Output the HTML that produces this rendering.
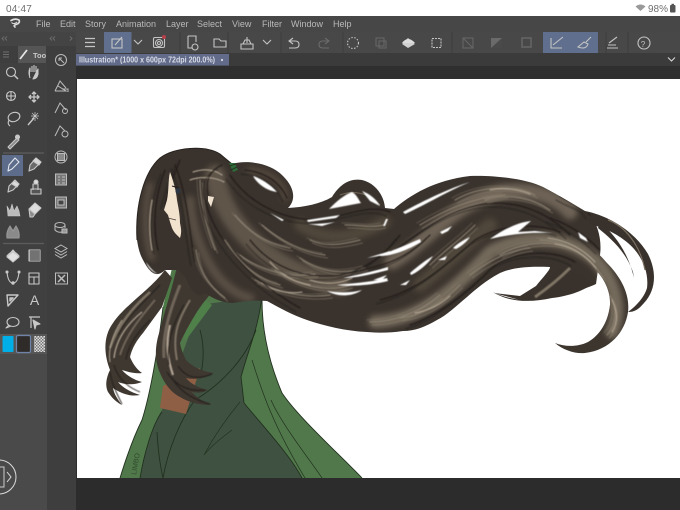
<!DOCTYPE html>
<html>
<head>
<meta charset="utf-8">
<style>
html,body{margin:0;padding:0;width:680px;height:510px;overflow:hidden;background:#2c2c2c}
svg{display:block;font-family:"Liberation Sans",sans-serif}
</style>
</head>
<body>
<svg width="680" height="510" viewBox="0 0 680 510" xmlns="http://www.w3.org/2000/svg">
<defs>
<filter id="b1" x="-10%" y="-10%" width="120%" height="120%"><feGaussianBlur stdDeviation="1.2"/></filter>
<filter id="b2" x="-10%" y="-10%" width="120%" height="120%"><feGaussianBlur stdDeviation="0.45"/></filter>
<filter id="b3" x="-20%" y="-20%" width="140%" height="140%"><feGaussianBlur stdDeviation="3"/></filter>
<pattern id="chk" width="3" height="3" patternUnits="userSpaceOnUse"><rect width="3" height="3" fill="#ddd"/><rect width="1.5" height="1.5" fill="#777"/><rect x="1.5" y="1.5" width="1.5" height="1.5" fill="#777"/></pattern>
<clipPath id="hairclip">
<path d="M137 240C135 205 144 172 160 158C175 147 205 145 220 154L232 164C245 160 270 162 283 176C295 188 296 200 288 208C305 207 320 204 332 197C340 184 350 178 362 180C375 183 384 195 385 208L394 209C410 195 435 180 470 176C490 175 525 178 543 187C560 196 575 205 590 214C598 225 602 240 600 255L596 284C590 287 580 290 570 292C555 300 530 300 520 300L494 293L520 296L536 286C545 275 550 270 550 267C525 266 512 268 500 273C485 281 475 290 467 297C455 307 447 315 437 320C425 327 415 331 403 331C390 333 380 333 367 332C345 331 325 326 307 320C292 315 280 308 267 301C255 300 245 301 233 303C222 303 212 298 205 293L178 270L165 270L142 258Z"/>
<path d="M540 228C565 228 590 243 606 262C622 278 630 295 628 312C625 332 610 350 585 353C575 354 563 350 555 343C565 347 578 347 588 342C600 335 608 322 610 305C611 288 600 270 585 262C570 255 550 250 530 250Z"/>
</clipPath>
</defs>

<!-- base UI -->
<rect width="680" height="510" fill="#2c2c2c"/>
<rect width="680" height="16" fill="#fff"/>
<rect y="16" width="680" height="16" fill="#474747"/>
<rect y="32" width="680" height="21" fill="#484848"/>
<rect x="76" y="53" width="604" height="13" fill="#3b3b3b"/>
<rect x="76" y="66" width="604" height="13" fill="#2f2f2f"/>
<rect x="0" y="32" width="47" height="478" fill="#4a4a4a"/>
<rect x="47" y="32" width="29" height="478" fill="#3e3e3e"/>
<rect x="0" y="32" width="76" height="14" fill="#444"/>
<rect x="0" y="46" width="47" height="17" fill="#3e3e3e"/>
<rect x="0" y="63" width="47" height="290" fill="#404040"/>
<rect x="18" y="46" width="28" height="17" fill="#555"/>
<rect x="0" y="334" width="47" height="20" fill="#565656"/>
<rect x="77" y="79" width="603" height="399" fill="#fff"/>

<!-- status -->
<text x="6" y="12" font-size="10" fill="#6f6f6f" letter-spacing=".2">04:47</text>
<text x="648" y="12" font-size="10" fill="#6f6f6f">98%</text>
<path d="M635.5 6.5Q640.500 2.500 645.500 6.500L640.500 11Z" fill="#999"/>
<rect x="670" y="5" width="5.500" height="7.500" rx="1" fill="#555"/><rect x="671.500" y="3.800" width="2.500" height="1.400" fill="#555"/>

<!-- menu -->
<path d="M11 20.500Q15 18 19 20Q20.500 23 16 24.500Q13 25.500 15 27" fill="none" stroke="#ddd" stroke-width="1.700" stroke-linecap="round"/>
<path d="M11.500 22.500Q14 25 17 22" fill="none" stroke="#ddd" stroke-width="1"/>
<g font-size="9" fill="#b9b9b9">
<text x="36" y="27">File</text><text x="60" y="27">Edit</text><text x="85" y="27">Story</text><text x="116" y="27">Animation</text><text x="166" y="27">Layer</text><text x="197" y="27">Select</text><text x="232" y="27">View</text><text x="262" y="27">Filter</text><text x="291" y="27">Window</text><text x="333" y="27">Help</text>
</g>

<!-- toolbar -->
<rect x="104" y="32" width="27.500" height="21" fill="#5f6f8d"/>
<rect x="543" y="32" width="55" height="21" fill="#5f6f8d"/>
<g fill="none" stroke="#c4c4c4" stroke-width="1.100">
<path d="M85 38.500H95M85 42.500H95M85 46.500H95" stroke-width="1.300"/>
<rect x="112" y="39" width="10" height="9"/><path d="M115 45L122 37"/>
<path d="M134 40L138 44L142 40"/>
<rect x="153.500" y="37.500" width="11" height="10" rx="1.500"/><circle cx="159" cy="43" r="3.500"/><circle cx="159" cy="43" r="1.500"/>
<path d="M188 36H196V42M188 36V48H192"/><circle cx="195" cy="47" r="3"/>
<path d="M214 39H219L221 41H226V47H214Z"/>
<path d="M241 44H253V49H241ZM243 44L245 40H249L251 44M247 37V43"/>
<path d="M263 40L267 44L271 40"/>
<path d="M293 38L289 41L293 44M289 41H295Q299 41 299 44.500T295 48H289"/>
<path d="M325 38L329 41L325 44M329 41H323Q319 41 319 44.500T323 48H329" stroke="#6b6b6b"/>
<circle cx="353" cy="43" r="5.500" stroke-dasharray="1.500 1.500"/>
<rect x="376" y="38" width="8" height="8" stroke="#666"/><rect x="379" y="41" width="7" height="7" stroke="#666"/>
<rect x="432" y="38.500" width="9" height="9" stroke-dasharray="2 1"/>
<rect x="463" y="38" width="10" height="10" stroke="#666"/><path d="M463 38L473 48" stroke="#666"/>
<rect x="522" y="38" width="9" height="9" stroke="#666" stroke-width="1.500"/>
<path d="M551 38V48H562M553 45L563 37"/>
<path d="M578 47Q586 50 588 44L584 42ZM586 42L591 37" />
<path d="M607 48H618M608 45H616M609 43L617 37"/>
<circle cx="644" cy="43" r="6"/>
</g>
<path d="M402 44L408 38L415 44L408 48Z" fill="#d0d0d0"/><path d="M402 43Q408 35 415 43" fill="#ddd"/>
<rect x="491" y="38" width="11" height="10" fill="#6a6a6a"/><path d="M491 48L502 38V48Z" fill="#4a4a4a"/>
<circle cx="164" cy="37" r="2" fill="#b8404a"/>
<path d="M180 32V53M228 32V53M281 32V53M343 32V53M452 32V53M606 32V53M628 32V53" stroke="#3c3c3c" stroke-width=".8"/>
<text x="643" y="47" font-size="8" fill="#c4c4c4" text-anchor="middle">?</text>

<!-- tab -->
<rect x="76" y="54" width="153" height="11.500" fill="#626c8a"/>
<text x="79" y="62.500" font-size="7.900" fill="#d8dbe6" font-weight="bold" textLength="136" lengthAdjust="spacingAndGlyphs">Illustration* (1000 x 600px 72dpi 200.0%)</text>
<circle cx="222" cy="60" r="1.100" fill="#d8dbe6"/>
<path d="M668 57.500L671.500 61L675 57.500" fill="none" stroke="#ddd" stroke-width="1"/>

<!-- panel top -->
<g fill="none" stroke="#6d6d6d" stroke-width=".9">
<path d="M4 36.500L2 38.500L4 40.500M7 36.500L5 38.500L7 40.500M52 36.500L50 38.500L52 40.500M55 36.500L53 38.500L55 40.500M70 36.500L72 38.500L70 40.500"/>
<path d="M3 52H9M3 54.500H9M3 57H9"/>
</g>
<path d="M20 59L27 50" stroke="#e5e5e5" stroke-width="1.800"/>
<text x="33" y="58" font-size="7.500" font-weight="bold" fill="#c8c8c8">Too</text>

<!-- tool active -->
<rect x="2" y="155" width="21" height="21" fill="#5c6c8a"/>
<path d="M3 153H44M3 243.500H44" stroke="#5c5c5c" stroke-width="1.200"/>

<!-- tools -->
<g fill="none" stroke="#c8c8c8" stroke-width="1.100" stroke-linejoin="round">
<circle cx="11" cy="72" r="4.500"/><path d="M14.500 75.500L18 79" stroke-width="1.500"/>
<path d="M30 78Q28 72 30 68V72M32 66V72M34 65V72M36 66V72M38 69V74Q37 79 33 79Z" fill="#c8c8c8"/>
<circle cx="11" cy="96" r="4.500"/><path d="M7 96H15M11 92V100"/>
<path d="M29 97H39M34 92V102M31 95L29 97L31 99M37 95L39 97L37 99M32 94L34 92L36 94M32 100L34 102L36 100" stroke-width="1.300"/>
<ellipse cx="14" cy="117" rx="6" ry="4.500" transform="rotate(-20 14 117)"/><path d="M9 120Q7 124 10 126"/>
<path d="M28 125L34 118" stroke-width="1.400"/><path d="M35 112V121M31 116H39M32 113L38 119M38 113L32 119" stroke-width=".7"/>
<path d="M8 147L14 141L17 138L19 140L16 143L10 149Z" fill="#8a8a8a"/><circle cx="17.500" cy="137" r="2" fill="#c8c8c8"/>
<path d="M8 171L9 165L15 158L19 162L12 169Z" stroke="#e2e6ee"/>
<path d="M29 171L30 165L36 158L41 162L34 169Z" fill="#6a6a6a"/><path d="M36 158L41 162L39 165L33 161Z" fill="#d8d8d8"/>
<path d="M8 192L9 186L15 180L19 184L13 190Z" fill="#5a5a5a"/><path d="M14 181L19 184L17 187L12 184Z" fill="#ddd"/>
<path d="M33 190V184H38V190M31 189H41V194H31Z" fill="#555"/><circle cx="36" cy="182" r="2" fill="#ddd"/>
<path d="M8 216L7 206L10 211L12 204L14 211L17 206L19 211L20 216Z" fill="#bbb" stroke-width=".6"/>
<path d="M29 209L35 203L41 208L35 214Z" fill="#ddd"/><path d="M29 209L35 214L33 217H30Z" fill="#8c8c8c"/>
<path d="M7 238Q6 232 10 226L13 231L16 226Q20 232 19 238Z" fill="#8a8a8a" stroke="#999"/>
<path d="M7 257L13 250L19 257L13 262Z" fill="#e0e0e0"/><path d="M7 256Q13 248 19 256L13 252Z" fill="#444"/>
<rect x="29" y="250" width="11" height="11" fill="#9a9a9a"/>
<path d="M7 272Q8 283 13 283Q18 283 19 272" /><circle cx="7" cy="272" r="1" fill="#c8c8c8"/><circle cx="19" cy="272" r="1" fill="#c8c8c8"/><circle cx="13" cy="283" r="1.200" fill="#c8c8c8"/>
<rect x="29" y="273" width="10" height="11"/><path d="M29 277H39M34 277V284"/>
<path d="M7 295H18L8 306Z M10 298H13L10 301Z" stroke-width="1.400"/>
<ellipse cx="13" cy="322" rx="6" ry="4.500"/><path d="M9 325L6 328L11 326"/>
<path d="M29 317H40M31 317V328" stroke-width="1.200"/><path d="M33 320L40 324L36 325L35 329Z" fill="#c8c8c8"/>
</g>
<text x="34.500" y="305" font-size="14" fill="#c8c8c8" text-anchor="middle">A</text>
<rect x="30" y="250" width="10" height="11" fill="#4a4a4a" opacity=".5"/>

<!-- colors -->
<rect x="2.500" y="336" width="11" height="16" rx="1" fill="#00aee8"/>
<rect x="16.500" y="335.500" width="14" height="17" rx="1.500" fill="#2f2b28" stroke="#6f82aa" stroke-width="1.200"/>
<rect x="34" y="336" width="11" height="16" fill="url(#chk)"/>

<!-- circle -->
<circle cx="-1" cy="477" r="17" fill="none" stroke="#ddd" stroke-width="1"/>
<rect x="-3" y="467" width="7" height="20" fill="none" stroke="#ccc" stroke-width="1"/>
<path d="M7 472L11 477L7 482" fill="none" stroke="#ddd" stroke-width="1"/>

<!-- sub tools -->
<g fill="none" stroke="#bcbcbc" stroke-width="1">
<circle cx="61" cy="60" r="5.500"/><path d="M59 58L64 63M59 58V61M59 58H62"/>
<path d="M55 91L60 81L66 88M58 86L66 91H55M62 89H68V92"/>
<path d="M55 113L60 103L66 110"/><circle cx="65" cy="111" r="2.500"/>
<path d="M55 136L60 126L65 131"/><circle cx="65" cy="134" r="3"/>
<circle cx="61" cy="157" r="6"/><rect x="57.500" y="153.500" width="7" height="7" fill="#8a8a8a"/>
<rect x="55.500" y="174" width="11" height="11" fill="#777"/><path d="M58 177H60M62 177H65M58 180H60M62 180H65M58 183H60M62 183H65"/>
<rect x="55.500" y="197" width="11" height="11" fill="#777"/><rect x="58" y="200" width="6" height="5" fill="#444"/>
<ellipse cx="60" cy="225" rx="5" ry="2.500"/><path d="M55 225V230Q58 233 62 232M65 225V228"/><rect x="62" y="229" width="5" height="4" fill="#999"/>
<path d="M61 245L67 248.500L61 252L55 248.500ZM55 251.500L61 255L67 251.500M55 254.500L61 258L67 254.500"/>
<rect x="55.500" y="273" width="12" height="11"/><path d="M58 275L65 282M65 275L58 282" stroke-width="1.500"/>
</g>

<!-- ARTWORK -->
<!-- robe -->
<path d="M120 478C124 465 132 440 142 420C150 395 158 350 163 307L175 255L188 262L262 300C262 330 268 360 282 393C298 417 340 455 362 478Z" fill="#50784a"/>
<path d="M140 478C144 455 152 425 162 410L200 305L262 296C258 330 248 350 241 377L244 403C262 425 290 455 302 478Z" fill="#3f5241"/>
<path d="M182 257L168 287L163 307L172 310L190 280Z" fill="#4c7a46"/>
<path d="M205 300L182 335L186 340L212 305Z" fill="#50804a"/>
<g fill="none" stroke="#22301f" stroke-width=".9">
<path d="M120 478C124 465 132 440 142 420C150 395 158 350 163 307"/>
<path d="M262 300C262 330 268 360 282 393C298 417 340 455 362 478"/>
<path d="M262 296C258 330 248 350 241 377L244 403C262 425 290 455 302 478"/>
<path d="M140 478C144 455 152 425 162 412"/>
<path d="M200 330C206 350 202 370 200 378"/>
<path d="M256 330C245 360 220 385 195 400C180 420 168 450 163 478"/>
<path d="M157 432C158 450 160 465 163 478"/>
<path d="M240 402C225 420 212 440 204 455C212 445 224 436 232 430" stroke-width=".6"/>
<path d="M252 360C260 385 270 420 305 478M271 400C282 425 310 460 322 478" stroke-width=".7"/>
</g>
<text transform="translate(136 475) rotate(-80)" font-size="7" fill="#2f4a2c">LIMBO</text>
<!-- belt -->
<path d="M163 386L200 368L186 414L160 408Z" fill="#8e5f44"/>

<!-- back left lock -->
<path d="M165 270C150 290 125 305 113 323C104 335 103 352 110 370C106 378 105 386 108 392C112 398 116 402 122 405C118 400 114 394 113 388C120 393 130 397 140 395C130 392 122 387 118 382C126 385 134 385 142 382C134 380 126 375 122 370C128 372 136 374 142 373C136 369 132 362 130 357C132 348 137 340 143 333L162 307L172 278Z" fill="#3f3831"/>
<g fill="none" filter="url(#b2)">
<path d="M150 292C132 308 118 325 110 348" stroke="#7f7465" stroke-width="2.500"/>
<path d="M142 312C126 325 116 340 114 358" stroke="#a89c8c" stroke-width="1.400"/>
<path d="M155 300C140 318 126 335 120 355" stroke="#6f6558" stroke-width="2"/>
<path d="M122 320C112 335 108 350 110 362" stroke="#aaa08f" stroke-width="1"/>
<path d="M122 338C120 348 122 358 126 366" stroke="#fff" stroke-width="0"/>
<path d="M114 365C118 380 130 388 140 392M110 372C112 385 118 396 122 404M160 285C140 305 125 320 118 335M150 320C138 332 128 345 126 360" stroke="#231f1b" stroke-width=".9"/>
</g>

<!-- front long lock -->
<path d="M178 262C172 290 162 320 160 330C155 345 154 360 160 373C165 385 172 393 180 397C190 403 200 405 212 405C203 402 197 398 192 392C198 393 202 393 208 390C198 388 190 383 186 378C196 380 205 378 214 373C204 372 194 368 186 360C183 354 181 349 180 343C186 330 193 318 200 307L212 292L192 265Z" fill="#3f3831"/>
<g fill="none" filter="url(#b2)">
<path d="M180 285C170 310 162 335 164 358" stroke="#6f6558" stroke-width="3"/>
<path d="M170 325C165 345 168 360 173 375" stroke="#b0a392" stroke-width="2.200"/>
<path d="M190 300C178 320 172 335 177 360" stroke="#7f7465" stroke-width="2"/>
<path d="M172 378C180 392 195 400 210 404M178 366C186 378 198 380 212 374M167 372C175 385 188 392 205 390M184 305C172 325 166 345 169 365" stroke="#231f1b" stroke-width="1"/>
</g>

<!-- head + main sweep -->
<path d="M137 240C135 205 144 172 160 158C175 147 205 145 220 154L232 164C245 160 270 162 283 176C295 188 296 200 288 208C305 207 320 204 332 197C340 184 350 178 362 180C375 183 384 195 385 208L394 209C410 195 435 180 470 176C490 175 525 178 543 187C560 196 575 205 590 214C598 225 602 240 600 255L596 284C590 287 580 290 570 292C555 300 530 300 520 300L494 293L520 296L536 286C545 275 550 270 550 267C525 266 512 268 500 273C485 281 475 290 467 297C455 307 447 315 437 320C425 327 415 331 403 331C390 333 380 333 367 332C345 331 325 326 307 320C292 315 280 308 267 301C255 300 245 301 233 303C222 303 212 298 205 293C198 300 190 290 186 278L178 270L165 270C155 280 148 270 142 258C139 252 138 246 137 240Z" fill="#3a332d"/>

<!-- right curl -->
<path d="M540 228C565 228 590 243 606 262C622 278 630 295 628 312C625 332 610 350 585 353C575 354 563 350 555 343C565 347 578 347 588 342C600 335 608 322 610 305C611 288 600 270 585 262C570 255 550 250 530 250Z" fill="#3d362f"/>
<!-- outer wisp -->
<path d="M585 211C610 216 635 232 648 254C657 272 656 290 644 303C638 310 634 312 628 312C636 306 644 298 647 288C649 272 642 255 628 243C615 232 603 228 590 224Z" fill="#39322c"/>
<path d="M600 222C615 235 628 252 634 278L633 272C625 250 610 238 598 228Z" fill="#39322c"/>
<path d="M608 220C625 226 640 245 645 270" fill="none" stroke="#7a6f60" stroke-width="1.200"/>

<!-- lower small lock -->
<path d="M493 292C505 298 518 300 527 300C540 295 550 278 558 268L582 275C588 282 592 282 594 283C585 290 570 296 552 298C530 303 508 302 493 292Z" fill="#39322c"/>
<path d="M535 297C545 290 558 280 570 268" stroke="#7f7465" stroke-width="3" fill="none" filter="url(#b2)"/>

<!-- broad tonal bands, clipped to silhouette -->
<g clip-path="url(#hairclip)">
<g fill="none" stroke-linecap="round" filter="url(#b3)">
<path d="M392 262C430 240 450 205 500 192C530 188 555 195 570 212" stroke="#6d6254" stroke-width="15"/>
<path d="M375 322C420 320 455 290 490 252C520 235 570 232 600 265C615 285 622 310 612 332" stroke="#746a5b" stroke-width="13"/>
<path d="M215 175C222 225 275 275 340 285" stroke="#5e5448" stroke-width="20"/>
<path d="M150 185C143 210 145 240 152 258" stroke="#5a5044" stroke-width="6"/>
<path d="M190 200C192 240 215 290 250 298" stroke="#5a5044" stroke-width="9"/>
<path d="M250 170C272 172 285 185 285 198" stroke="#54493e" stroke-width="6"/>
<path d="M300 225C330 245 360 235 385 222" stroke="#4f463b" stroke-width="12"/>
<path d="M420 285C440 270 470 240 490 225" stroke="#4f463b" stroke-width="14"/>
</g>

<!-- strands -->
<g fill="none" stroke-linecap="round" filter="url(#b2)">
<g id="lite" stroke="#8f8474" stroke-width="1.200" opacity=".85">
<path d="M455 200C480 185 515 185 535 195"/>
<path d="M420 225C445 210 470 198 505 195"/>
<path d="M485 200C510 192 535 200 550 210"/>
<path d="M540 240C565 240 590 255 603 278"/>
<path d="M500 255C525 240 555 240 575 250"/>
<path d="M610 295C618 310 616 325 607 335"/>
<path d="M470 275C490 260 510 250 530 248"/>
<path d="M400 318C425 315 445 300 460 285"/>
<path d="M370 322C395 322 420 312 440 295"/>
<path d="M430 265C445 250 460 240 475 225"/>
<path d="M275 270C300 288 330 292 350 285"/>
<path d="M255 280C280 295 310 298 330 295"/>
<path d="M300 258C320 272 340 275 365 268"/>
<path d="M225 240C240 265 260 280 280 285"/>
<path d="M310 240C325 247 340 245 360 240"/>
<path d="M345 225C360 225 372 228 383 225"/>
<path d="M235 215C252 235 270 245 290 248"/>
<path d="M200 180C200 200 205 225 215 250"/>
<path d="M196 250C198 270 208 285 225 298"/>
<path d="M240 255C262 272 290 278 315 274"/>
<path d="M262 225C280 240 300 252 325 255"/>
</g>
<use href="#lite" transform="translate(2.500 3)" opacity=".55"/>
<use href="#lite" transform="translate(-3 -2)" opacity=".4"/>
<g stroke="#b0a492" stroke-width="1.100">
<path d="M490 190C505 187 520 190 530 194"/>
<path d="M548 238C565 240 582 248 595 262"/>
<path d="M555 244C570 246 585 254 596 268"/>
<path d="M612 300C618 312 618 322 612 332"/>
<path d="M415 313C430 310 440 305 450 296"/>
<path d="M310 280C325 285 340 284 352 278"/>
<path d="M270 262C285 278 295 282 310 285"/>
<path d="M152 200C148 220 150 240 152 250"/>
<path d="M193 172C205 168 215 170 222 175"/>
<path d="M190 180C200 176 215 177 224 182"/>
<path d="M262 283C275 292 290 294 302 292"/>
</g>
<g id="dark" stroke="#1f1b18" stroke-width="1.100" opacity=".9">
<path d="M395 250C430 225 455 205 495 203C525 203 550 215 570 235"/>
<path d="M380 300C420 290 445 265 475 240C500 225 535 222 560 232"/>
<path d="M410 325C440 315 470 290 495 265C520 250 555 250 575 262"/>
<path d="M360 270C390 265 410 255 430 235"/>
<path d="M250 240C270 265 300 280 340 275C365 270 385 255 400 235"/>
<path d="M205 200C215 240 250 280 300 308"/>
<path d="M230 175C250 205 290 225 330 218C355 212 375 205 390 212"/>
<path d="M180 160C172 180 168 190 165 205"/>
<path d="M175 165C188 195 190 240 195 262"/>
<path d="M165 170C155 195 152 225 158 250"/>
<path d="M222 165C210 170 205 180 208 195"/>
<path d="M600 250C585 235 570 225 550 218"/>
<path d="M245 170C265 172 280 182 287 198"/>
<path d="M590 215C585 205 575 205 560 196"/>
</g>
<use href="#dark" transform="translate(-4 4)" opacity=".55"/>
</g>
</g>
<path d="M340 195C352 190 368 192 380 205" fill="none" stroke="#736859" stroke-width="1"/>

<!-- holes -->
<g fill="#fff" filter="url(#b2)">
<path d="M253 176C260 178 270 184 277 192C268 191 258 185 253 176Z"/>
<path d="M329 209C337 201 344 195 352 192C357 195 358 199 361 203C350 205 340 207 329 209Z"/>
<path d="M362 191C370 194 376 199 380 206L370 201Z"/>
<path d="M327 291C340 293 350 293 362 290C352 297 338 297 327 291Z"/>
<path d="M337 285C355 283 372 282 387 278L388 281C372 285 352 287 337 285Z"/>
<path d="M343 278C360 274 375 271 388 267L388 270C372 274 358 278 343 278Z"/>
<path d="M307 220L340 215L336 218L308 222Z"/>
<path d="M308 224C320 224 328 223 335 222L322 226Z"/>
<path d="M270 213L284 220L282 221Z"/>
<path d="M367 258L390 251V254Z"/>
<path d="M380 255C395 250 408 244 420 239L421 242C408 250 392 256 380 256Z"/>
<path d="M410 273C418 266 426 260 433 256C428 264 418 272 411 275Z"/>
<path d="M453 248C458 243 464 240 470 237C466 243 460 247 456 249Z"/>
<path d="M438 260L447 256L445 260Z"/>
<path d="M440 232L452 226L448 231L442 234Z"/>
<path d="M490 239C505 228 520 222 531 221L518 232L535 231L553 233C530 232 510 234 490 239Z"/>
<path d="M578 232L586 238L588 242L580 238Z"/>
<path d="M373 280L387 275L382 280Z"/>
<path d="M400 285L410 280L406 285Z"/>
<path d="M403 212C425 200 450 188 470 182C450 190 425 205 405 214Z"/>
<path d="M383 226L386 219L388 219L385 226Z"/>
<path d="M146 262C150 268 154 272 158 274C152 272 148 268 146 262Z"/>
</g>
<path d="M137 240C135 205 144 172 160 158C175 147 205 145 220 154L232 164" fill="none" stroke="#27221e" stroke-width="1"/>

<!-- face -->
<path d="M170 172C168 180 169 190 167 200L164 210L168 215L170 222L172 228C174 233 178 236 180 238C182 232 181 228 180 223C180 214 178 206 177 200C176 190 173 180 170 172Z" fill="#f2e3cf"/>
<path d="M168 218L176 220" stroke="#4a3f38" stroke-width=".9" fill="none"/>
<path d="M172 186L179 188" stroke="#241f1c" stroke-width="1.100" fill="none"/>
<ellipse cx="178" cy="191" rx="2.500" ry="3" fill="#2c3542"/>
<path d="M208 196L214 197L211 207L208 201Z" fill="#efe2d0"/>
<path d="M229 163L235 163L238 170L233 172Z" fill="#2f6a38"/>
<path d="M229 166L236 164M231 170L237 167" stroke="#1c2c1c" stroke-width=".7"/>
</svg>
</body>
</html>
